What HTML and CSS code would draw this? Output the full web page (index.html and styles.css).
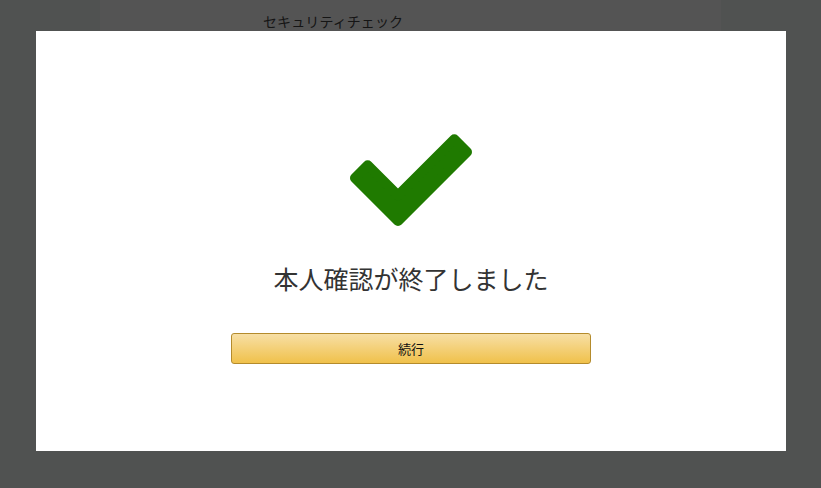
FILE: index.html
```html
<!DOCTYPE html>
<html lang="ja">
<head>
<meta charset="utf-8">
<title>セキュリティチェック</title>
<link rel="stylesheet" href="styles.css">
</head>
<body>
<div class="page">
  <div class="page-title">セキュリティチェック</div>
</div>
<div class="modal">
  <svg class="check" width="134" height="106" viewBox="0 0 134 106" aria-hidden="true">
    <polygon points="54,95 11,52 23.7,39.3 54,69.5 110.3,13.3 123,26" fill="#1f7a00" stroke="#1f7a00" stroke-width="10" stroke-linejoin="round"/>
  </svg>
  <h1 class="heading">本人確認が終了しました</h1>
  <button class="btn" type="button">続行</button>
</div>
</body>
</html>
```
FILE: styles.css
```css
html, body {
  margin: 0;
  padding: 0;
}
body {
  width: 821px;
  height: 488px;
  background: #505251;
  font-family: "Noto Sans CJK JP", "Noto Sans", "Liberation Sans", sans-serif;
  overflow: hidden;
  position: relative;
}
.page {
  margin-left: 100px;
  width: 621px;
  height: 31px;
  background: #545454;
  box-sizing: border-box;
  padding-top: 11px;
  padding-left: 163px;
}
.page-title {
  font-size: 14px;
  line-height: 20px;
  color: #151515;
  letter-spacing: 0.1px;
}
.modal {
  position: absolute;
  left: 36px;
  top: 31px;
  width: 750px;
  height: 420px;
  background: #ffffff;
  display: flex;
  flex-direction: column;
  align-items: center;
}
.check {
  display: block;
  margin-top: 95px;
}
.heading {
  margin: 31px 0 0 0;
  font-size: 25px;
  line-height: 30px;
  font-weight: 400;
  color: #333333;
}
.btn {
  margin-top: 40px;
  width: 360px;
  height: 31px;
  box-sizing: border-box;
  border: 1px solid #b48b2c;
  border-radius: 3px;
  background: linear-gradient(to bottom, #f7dfa5, #f0c14b);
  font-family: "Noto Sans CJK JP", "Noto Sans", sans-serif;
  font-size: 13px;
  line-height: 29px;
  color: #111111;
  padding: 0;
}
```
